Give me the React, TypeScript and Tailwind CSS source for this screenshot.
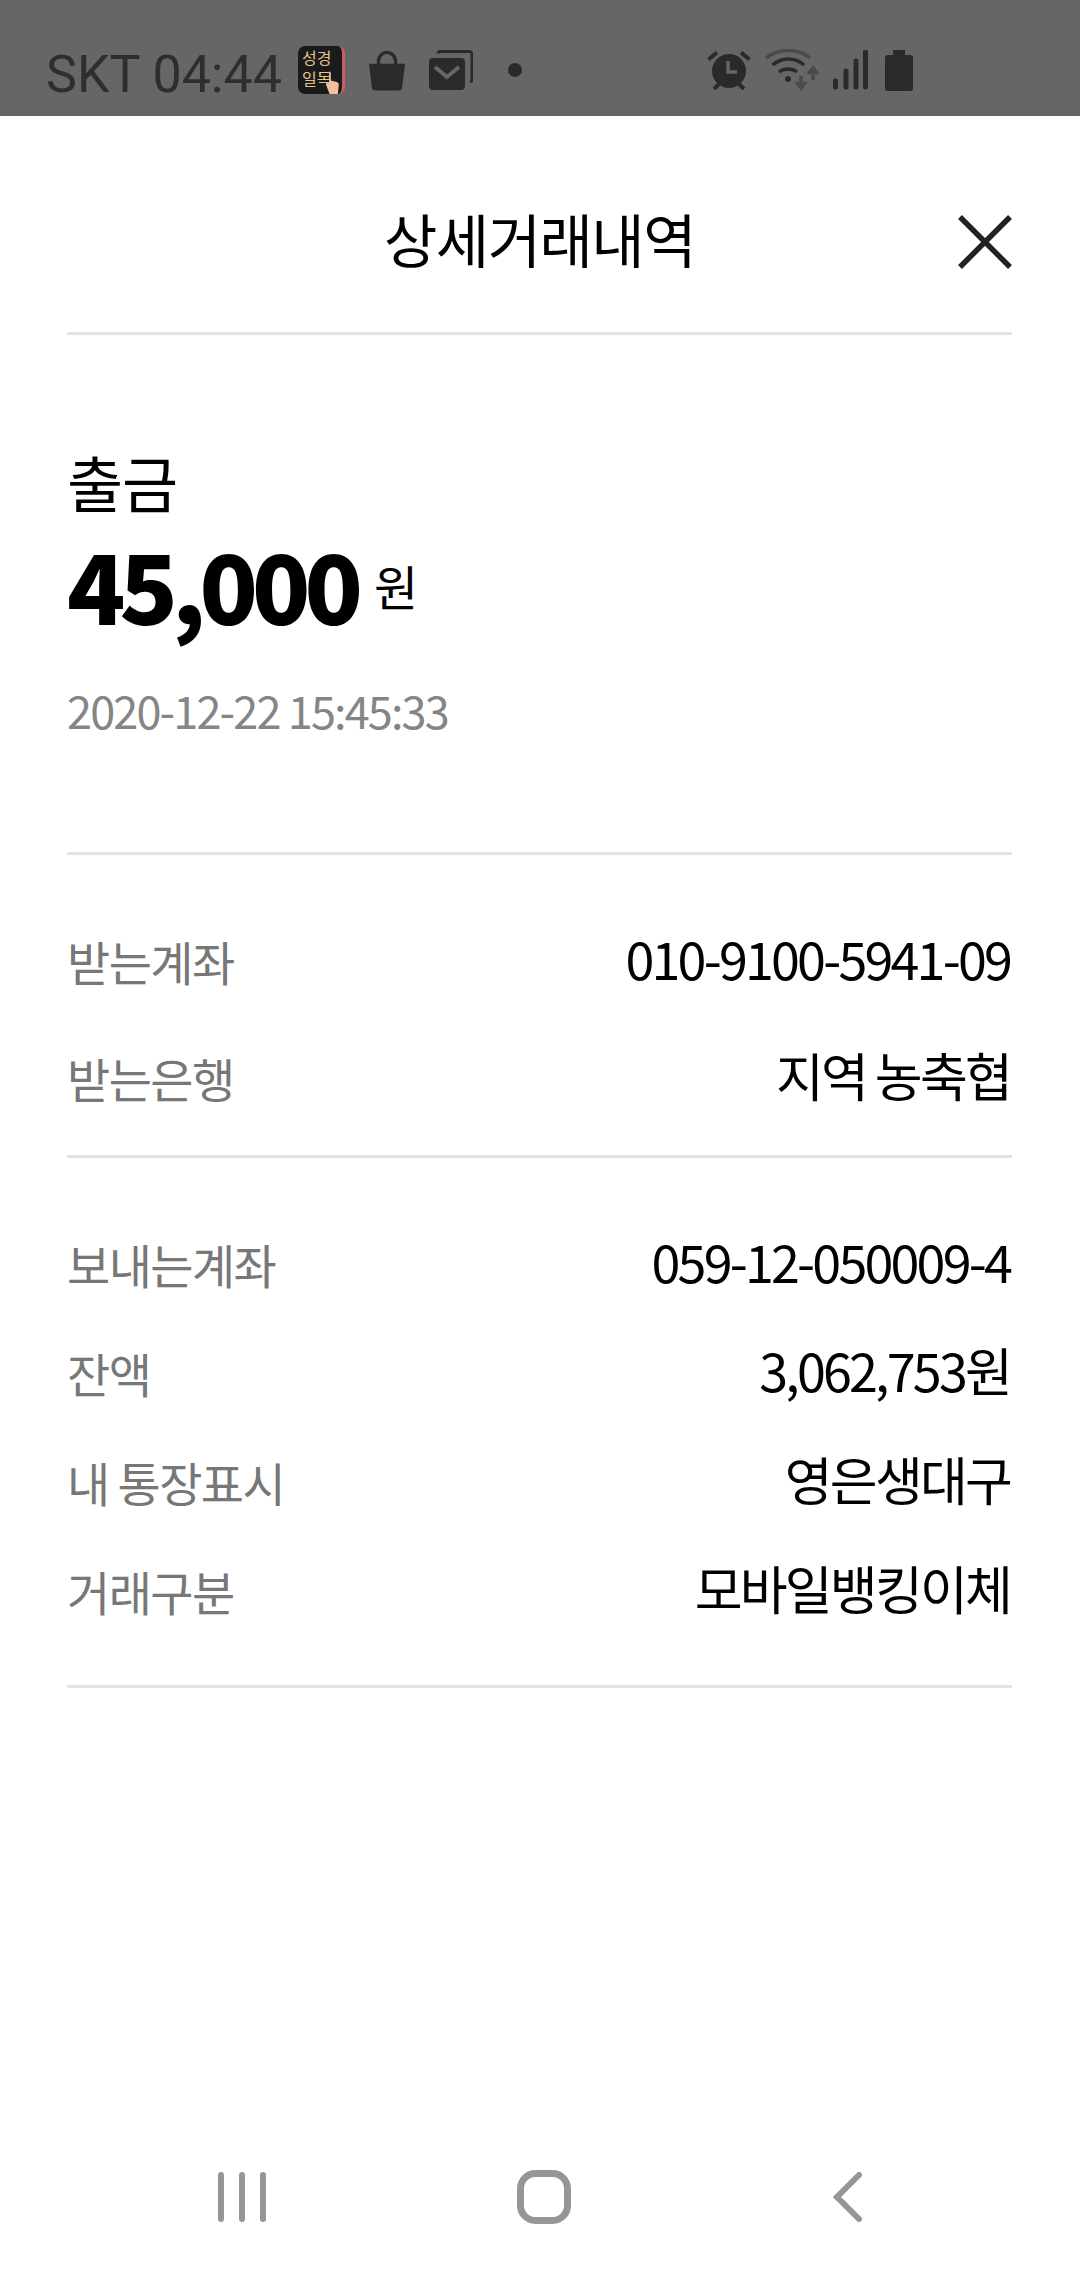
const font = { fontFamily: '"Noto Sans CJK KR", "Noto Sans", sans-serif' }

function Row({ label, value, className }: { label: string; value: string; className: string }) {
  return (
    <div className={`flex items-start justify-between ${className}`}>
      <span className="mt-[3px] text-[47px] leading-[60px] tracking-[-1.6px] text-[#777777]">{label}</span>
      <span className="mr-[2px] text-[52px] leading-[60px] tracking-[-2.8px] text-black">{value}</span>
    </div>
  )
}

function AppIcon() {
  return (
    <div className="relative ml-[16px] h-[48px] w-[47px] overflow-hidden rounded-[7px] border-r-[3px] border-[#c9605f] bg-[#1b1b1b] pl-[4px] pt-[1px]">
      <div className="text-[16px] leading-[21px] text-[#e0c48a]" style={font}>
        성경
        <br />
        일독
      </div>
      <svg className="absolute bottom-0 right-[1px]" width="16" height="24" viewBox="0 0 16 24">
        <path d="M4 1.500c1.200 0 1.800.8 1.800 2v7l6 1.500c1.500.5 2 1.500 2 3l-1 9H4.500L1 14.500c-.5-1 1-2 2-1l1 1z" fill="#f2c09a" />
      </svg>
    </div>
  )
}

function StatusBar() {
  const c = "#2a2a2a"
  return (
    <div className="flex h-[116px] items-center bg-[#666666] pl-[46px] pt-[24px]">
      <span className="mt-[10px] text-[52px] leading-[54px] text-[#2e2e2e]" style={{ fontFamily: "Roboto, sans-serif" }}>
        SKT 04:44
      </span>
      <AppIcon />
      {/* bag */}
      <svg className="ml-[23px]" width="38" height="43" viewBox="0 0 40 42">
        <path d="M11 16V11a9 9 0 0 1 18 0v5" fill="none" stroke={c} strokeWidth="3.500" />
        <path d="M1 14h38l-3 24a4 4 0 0 1-4 4H8a4 4 0 0 1-4-4z" fill={c} />
      </svg>
      {/* mail */}
      <svg className="ml-[23px]" width="44" height="40" viewBox="0 0 44 40">
        <path d="M9 3.500a2 2 0 0 1 2-2h29a3 3 0 0 1 3 3v25a2 2 0 0 1-2 2" fill="none" stroke={c} strokeWidth="3" />
        <rect x="0" y="8" width="36" height="32" rx="4" fill={c} />
        <path d="M6 17l12 10 12-10" fill="none" stroke="#666666" strokeWidth="4" />
      </svg>
      <span className="ml-[35px] h-[14px] w-[14px] rounded-full bg-[#2a2a2a]" />
      {/* alarm */}
      <svg className="ml-[185px]" width="44" height="40" viewBox="0 0 44 40">
        <circle cx="22" cy="21" r="17" fill={c} />
        <path d="M1.500 9.500L10 2.500M42.500 9.500L34 2.500M7 39l5-5M37 39l-5-5" stroke={c} strokeWidth="4" />
        <path d="M21 11v11h9" fill="none" stroke="#666666" strokeWidth="3.500" />
      </svg>
      {/* wifi + arrows */}
      <svg className="ml-[14px]" width="56" height="42" viewBox="0 0 56 42">
        <path d="M1 9C14-1 33-1 45 9" fill="none" stroke="#4a4a4a" strokeWidth="3.500" />
        <path d="M7.500 16C17 8 30 8 39 16M14 23c5-4 13-4 18 0" fill="none" stroke={c} strokeWidth="3.500" />
        <circle cx="23" cy="30" r="3" fill={c} />
        <path d="M36 27v12M31 33l5 6 5-6M48 31V19M43 25l5-6 5 6" fill="none" stroke="#4a4a4a" strokeWidth="3.500" />
      </svg>
      {/* signal */}
      <svg className="ml-[11px]" width="36" height="40" viewBox="0 0 36 40">
        <path d="M3.500 31v6M14 21v16M24 11v26M33.500 2v35" fill="none" stroke={c} strokeWidth="5" strokeLinecap="round" />
      </svg>
      {/* battery */}
      <svg className="ml-[17px]" width="28" height="41" viewBox="0 0 28 41">
        <path d="M8 0h12v5h5a3 3 0 0 1 3 3v30a3 3 0 0 1-3 3H3a3 3 0 0 1-3-3V8a3 3 0 0 1 3-3h5z" fill={c} />
      </svg>
    </div>
  )
}

function NavBar() {
  return (
    <div className="flex h-[110px] items-center pl-[218px]">
      <svg width="48" height="50" viewBox="0 0 48 50">
        <path d="M3 3v44M24 3v44M45 3v44" fill="none" stroke="#969696" strokeWidth="6" strokeLinecap="round" />
      </svg>
      <svg className="ml-[251px]" width="54" height="54" viewBox="0 0 54 54">
        <rect x="3.500" y="3.500" width="47" height="47" rx="15" fill="none" stroke="#969696" strokeWidth="7" />
      </svg>
      <svg className="ml-[261px]" width="31" height="50" viewBox="0 0 31 50">
        <path d="M27 3L5 25l22 22" fill="none" stroke="#969696" strokeWidth="6" strokeLinecap="round" />
      </svg>
    </div>
  )
}

export default function App() {
  return (
    <div className="flex h-[2280px] flex-col bg-white" style={font}>
      <StatusBar />

      <div className="flex-1 pl-[67px] pr-[68px]">
        {/* Header */}
        <div className="relative flex h-[219px] items-center justify-center border-b-[3px] border-[#e2e2e2] pt-[28px]">
          <h1 className="text-[58px] font-normal leading-[70px] tracking-[-1.5px] text-black">상세거래내역</h1>
          <svg className="absolute right-0 top-[99px]" width="54" height="54" viewBox="0 0 54 54">
            <path d="M2 2l50 50M52 2L2 52" fill="none" stroke="#222222" strokeWidth="5.500" />
          </svg>
        </div>

        {/* Amount */}
        <div className="h-[520px] border-b-[3px] border-[#e2e2e2] pt-[107px]">
          <p className="text-[61px] leading-[80px] tracking-[-1px] text-black">출금</p>
          <p className="mt-[16px] flex items-center leading-[90px]">
            <span className="text-[96px] font-black tracking-[-6px] text-black">45,000</span>
            <span className="ml-[17px] mt-[2px] text-[48px] text-black">원</span>
          </p>
          <p className="mt-[50px] text-[45px] leading-[60px] tracking-[-1.85px] text-[#858585]">2020-12-22 15:45:33</p>
        </div>

        {/* Receiving */}
        <div className="h-[303px] border-b-[3px] border-[#e2e2e2] pt-[73px]">
          <Row label="받는계좌" value="010-9100-5941-09" className="" />
          <Row label="받는은행" value="지역 농축협" className="mt-[54px]" />
        </div>

        {/* Sending */}
        <div className="h-[530px] border-b-[3px] border-[#e2e2e2] pt-[73px]">
          <Row label="보내는계좌" value="059-12-050009-4" className="" />
          <Row label="잔액" value="3,062,753원" className="mt-[46px]" />
          <Row label="내 통장표시" value="영은생대구" className="mt-[46px]" />
          <Row label="거래구분" value="모바일뱅킹이체" className="mt-[46px]" />
        </div>
      </div>

      <div className="pb-[28px]">
        <NavBar />
      </div>
    </div>
  )
}
